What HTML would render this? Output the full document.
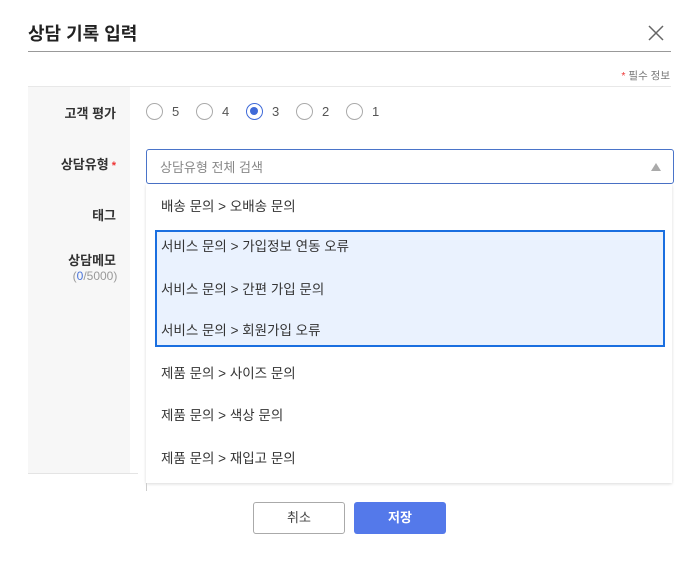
<!DOCTYPE html>
<html><head><meta charset="utf-8"><style>
body{margin:0;width:700px;height:563px;background:#fff;font-family:"Liberation Sans","Noto Sans CJK KR",sans-serif;position:relative;overflow:hidden;color:#222}
.a{position:absolute}
.lbl{position:absolute;right:584px;font-size:13px;font-weight:bold;color:#333;white-space:nowrap}
.r{position:absolute;width:17px;height:17px;border:1.3px solid #aaa;border-radius:50%;top:103px;box-sizing:border-box}
.rn{position:absolute;top:104px;font-size:13px;color:#555}
.it{position:absolute;left:161px;font-size:13.5px;color:#333;white-space:nowrap}
</style></head><body>
<div class="a" style="left:28px;top:20px;font-size:18px;font-weight:bold;color:#222">상담 기록 입력</div>
<svg class="a" style="left:648px;top:25px" width="16" height="16"><path d="M1 1L15 15M15 1L1 15" stroke="#666" stroke-width="1.5"/></svg>
<div class="a" style="left:28px;top:51px;width:643px;height:1px;background:#999"></div>
<div class="a" style="right:30px;top:68px;font-size:10.5px;color:#777"><span style="color:#e33">*</span> 필수 정보</div>
<div class="a" style="left:28px;top:86px;width:643px;height:1px;background:#e8e8e8"></div>
<div class="a" style="left:28px;top:87px;width:102px;height:386px;background:#f7f7f7"></div>
<div class="a" style="left:28px;top:473px;width:110px;height:1px;background:#e4e4e4"></div>
<div class="lbl" style="top:103px">고객 평가</div>
<div class="lbl" style="top:154px">상담유형<span style="color:#e33;font-size:11px"> *</span></div>
<div class="lbl" style="top:205px">태그</div>
<div class="lbl" style="top:250px">상담메모</div>
<div class="a" style="left:70px;width:50px;text-align:center;top:269px;font-size:12px;color:#999">(<span style="color:#4a74d9">0</span>/5000)</div>
<div class="r" style="left:146px"></div><div class="rn" style="left:172px">5</div>
<div class="r" style="left:196px"></div><div class="rn" style="left:222px">4</div>
<div class="r" style="left:246px;border:1.5px solid #3f6ad8"><div style="position:absolute;left:3px;top:3px;width:8px;height:8px;border-radius:50%;background:#3f6ad8"></div></div><div class="rn" style="left:272px">3</div>
<div class="r" style="left:296px"></div><div class="rn" style="left:322px">2</div>
<div class="r" style="left:346px"></div><div class="rn" style="left:372px">1</div>
<div class="a" style="left:146px;top:149px;width:528px;height:35px;border:1px solid #4a74c9;border-radius:3px;box-sizing:border-box"></div>
<div class="a" style="left:160px;top:157px;font-size:13px;color:#888">상담유형 전체 검색</div>
<svg class="a" style="left:650px;top:162px" width="12" height="10"><path d="M6 1L11 9H1Z" fill="#aaa"/></svg>
<div class="a" style="left:146px;top:184px;width:526px;height:299px;background:#fff;box-shadow:0 1px 3px rgba(0,0,0,.15)"></div>
<div class="a" style="left:146px;top:483px;width:1px;height:8px;background:#ccc"></div>
<div class="a" style="left:155px;top:230px;width:510px;height:117px;background:#eaf2fe;border:2.5px solid #1a6fe0;box-sizing:border-box"></div>
<div class="it" style="top:195px">배송 문의 &gt; 오배송 문의</div>
<div class="it" style="top:235px">서비스 문의 &gt; 가입정보 연동 오류</div>
<div class="it" style="top:278px">서비스 문의 &gt; 간편 가입 문의</div>
<div class="it" style="top:319px">서비스 문의 &gt; 회원가입 오류</div>
<div class="it" style="top:362px">제품 문의 &gt; 사이즈 문의</div>
<div class="it" style="top:404px">제품 문의 &gt; 색상 문의</div>
<div class="it" style="top:447px">제품 문의 &gt; 재입고 문의</div>
<div class="a" style="left:253px;top:502px;width:92px;height:32px;border:1px solid #aaa;border-radius:3px;box-sizing:border-box;text-align:center;line-height:30px;font-size:13px;color:#444">취소</div>
<div class="a" style="left:354px;top:502px;width:92px;height:32px;background:#5479ea;border-radius:3px;text-align:center;line-height:32px;font-size:13px;color:#fff;font-weight:bold">저장</div>
</body></html>
